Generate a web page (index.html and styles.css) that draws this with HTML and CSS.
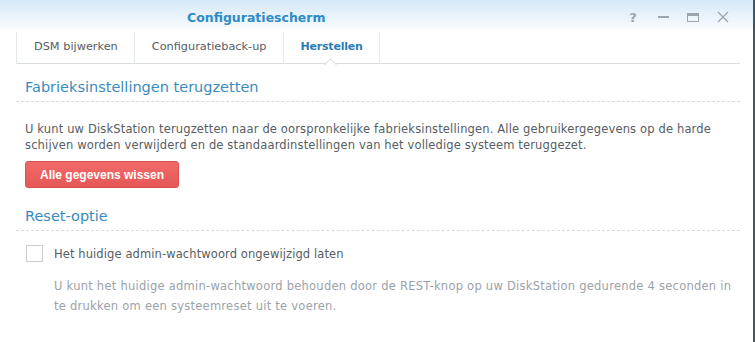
FILE: index.html
```html
<!DOCTYPE html>
<html lang="nl">
<head>
    <meta charset="UTF-8">
    <title>Configuratiescherm</title>
    <link rel="stylesheet" href="styles.css">
</head>
<body>
    <div class="window">
        <!-- Title bar -->
        <div class="titlebar">
            <span class="title">Configuratiescherm</span>
            <div class="controls">
                <span class="ctl ctl-help">?</span>
                <span class="ctl ctl-min"></span>
                <span class="ctl ctl-max"></span>
                <span class="ctl ctl-close">
                    <svg width="12" height="12" viewBox="0 0 12 12"><path d="M1 1 L11 11 M11 1 L1 11" stroke="#9aa5ae" stroke-width="1.3" fill="none"/></svg>
                </span>
            </div>
        </div>

        <!-- Tabs -->
        <div class="tabs">
            <div class="tab">DSM bijwerken</div>
            <div class="tab">Configuratieback-up</div>
            <div class="tab active">Herstellen</div>
        </div>

        <div class="content">
            <h3 class="section-title">Fabrieksinstellingen terugzetten</h3>
            <p class="desc">U kunt uw DiskStation terugzetten naar de oorspronkelijke fabrieksinstellingen. Alle gebruikergegevens op de harde schijven worden verwijderd en de standaardinstellingen van het volledige systeem teruggezet.</p>
            <button class="btn-danger">Alle gegevens wissen</button>

            <h3 class="section-title">Reset-optie</h3>
            <label class="check-row">
                <span class="checkbox"></span>
                <span>Het huidige admin-wachtwoord ongewijzigd laten</span>
            </label>
            <p class="hint">U kunt het huidige admin-wachtwoord behouden door de REST-knop op uw DiskStation gedurende 4 seconden in te drukken om een systeemreset uit te voeren.</p>
        </div>
    </div>
</body>
</html>
```

FILE: styles.css
```css
body {
    margin: 0;
    font-family: 'DejaVu Sans', sans-serif;
    background: #ffffff;
}

.window {
    width: 753px;
    height: 342px;
    border-right: 2px solid #3f5866;
    background: #ffffff;
    overflow: hidden;
}

.titlebar {
    height: 31px;
    display: flex;
    align-items: center;
    background: linear-gradient(to bottom, #d6e8f7, #f3f9fd 80%, #ffffff);
}

.title {
    margin-left: 187px;
    margin-top: 4px;
    font-size: 12.5px;
    font-weight: bold;
    color: #2e8bc6;
}

.controls {
    margin-left: auto;
    margin-right: 15px;
    margin-top: 3px;
    display: flex;
    align-items: center;
}

.ctl {
    width: 30px;
    height: 14px;
    display: flex;
    align-items: center;
    justify-content: center;
    color: #9aa5ae;
}

.ctl-help {
    font-size: 13px;
    font-weight: bold;
    font-family: 'DejaVu Sans', sans-serif;
}

.ctl-min::before {
    content: "";
    width: 11px;
    height: 2px;
    background: #9aa5ae;
}

.ctl-max::before {
    content: "";
    width: 10px;
    height: 5px;
    border: 1px solid #9aa5ae;
    border-top-width: 3px;
}

.tabs {
    display: flex;
    margin: 0 13px 0 16px;
    height: 32px;
    border-bottom: 1px solid #d9dee3;
}

.tab {
    padding: 8px 16px 0 17px;
    height: 24px;
    margin-top: 1px;
    font-size: 11.3px;
    color: #555d63;
    border-left: 1px solid #e4e8eb;
    position: relative;
}

.tab:last-child {
    border-right: 1px solid #e4e8eb;
}

.tab.active {
    font-size: 11px;
    letter-spacing: -0.2px;
    font-weight: bold;
    color: #2d7db8;
}

.tab.active::after {
    content: "";
    position: absolute;
    left: 50%;
    bottom: -1px;
    margin-left: -5px;
    width: 8px;
    height: 8px;
    background: #ffffff;
    border-left: 1px solid #d9dee3;
    border-top: 1px solid #d9dee3;
    transform: translateY(4px) rotate(45deg);
}

.content {
    padding: 14px 13px 0 16px;
}

.section-title {
    margin: 0;
    padding: 0 0 5px 9px;
    font-size: 14.5px;
    line-height: 18px;
    font-weight: normal;
    color: #3a8bbd;
    border-bottom: 1px dashed #d5dade;
}

.desc {
    margin: 19px 0 0 9px;
    font-size: 11.5px;
    line-height: 16px;
    letter-spacing: 0.15px;
    color: #565d63;
}

.btn-danger {
    display: block;
    margin: 8px 0 0 9px;
    height: 27px;
    width: 154px;
    border: 1px solid #d8504f;
    border-radius: 3px;
    background: linear-gradient(to bottom, #f06a69, #e65757);
    color: #ffffff;
    font-family: 'Liberation Sans', sans-serif;
    font-size: 12px;
    font-weight: bold;
    cursor: pointer;
}

.btn-danger + .section-title {
    margin-top: 19px;
}

.check-row {
    display: flex;
    align-items: center;
    margin: 14px 0 0 10px;
    font-size: 11.5px;
    letter-spacing: 0.1px;
    color: #565d63;
}

.checkbox {
    width: 15px;
    height: 15px;
    border: 1px solid #c9ced3;
    background: #ffffff;
    margin-right: 11px;
}

.hint {
    margin: 14px 0 0 38px;
    font-size: 11.5px;
    line-height: 20px;
    letter-spacing: 0.25px;
    color: #9ba2a8;
}
```
